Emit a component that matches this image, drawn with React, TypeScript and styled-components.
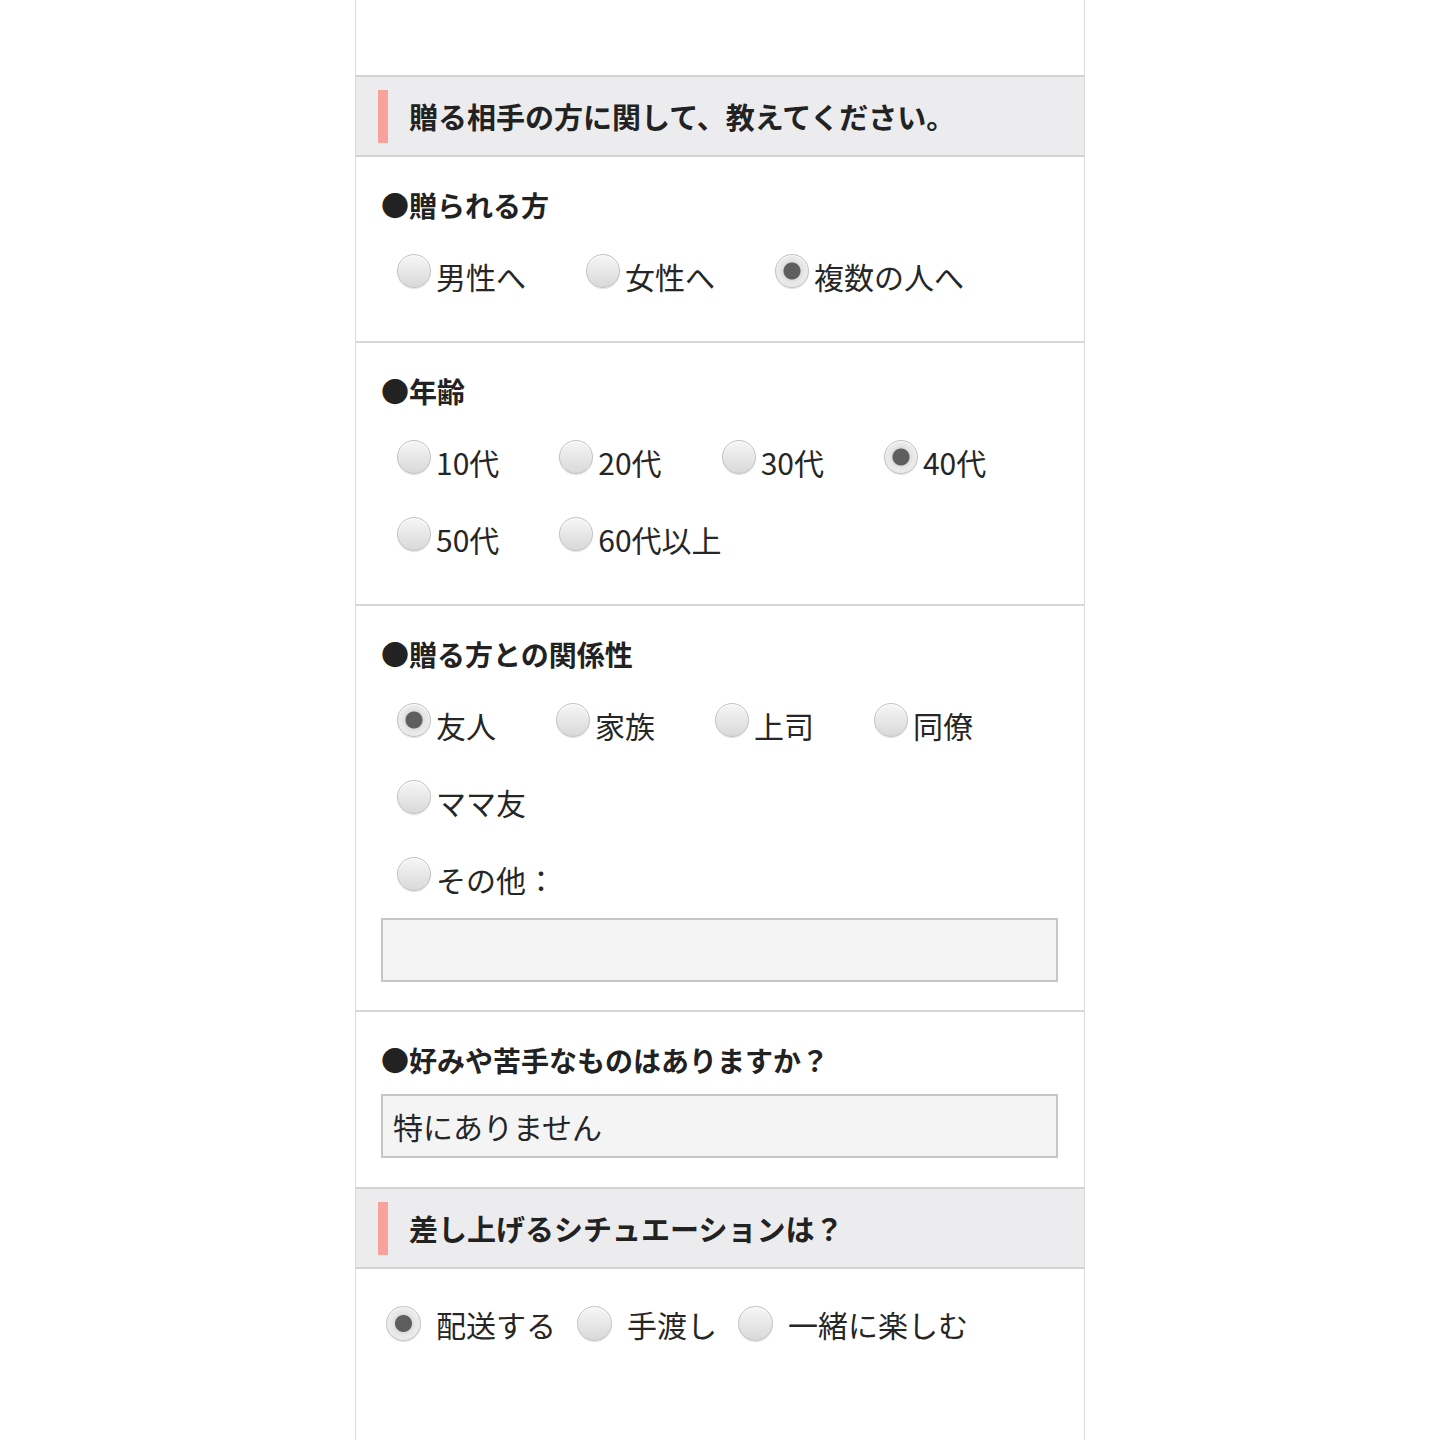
import React from "react";
import styled, { createGlobalStyle } from "styled-components";

const GlobalStyle = createGlobalStyle`
  html, body { margin: 0; padding: 0; background: #ffffff; }
  body {
    font-family: "Noto Sans CJK JP", "Noto Sans", sans-serif;
    color: #222;
  }
  * { box-sizing: border-box; }
`;

const Page = styled.div`
  width: 730px;
  margin: 0 auto;
  min-height: 1440px;
  border-left: 1px solid #dcdcdc;
  border-right: 1px solid #dcdcdc;
  background: #fff;
`;

const TopSpace = styled.div`
  height: 75px;
`;

const Heading = styled.div`
  height: 82px;
  background: #ececee;
  border-top: 2px solid #d2d2d2;
  border-bottom: 2px solid #d2d2d2;
  display: flex;
  align-items: center;
  padding-left: 22px;
  gap: 21px;
`;

const Accent = styled.span`
  width: 10px;
  height: 53px;
  background: #f9a29b;
  flex: none;
`;

const HeadingText = styled.h2`
  margin: 0;
  font-size: 29px;
  font-weight: 700;
  line-height: 40px;
  color: #222;
  letter-spacing: 0;
`;

const Section = styled.section<{ $divider?: boolean; $top?: number; $bottom?: number }>`
  padding: ${(p) => p.$top ?? 28}px 26px ${(p) => p.$bottom ?? 27}px 25px;
  border-bottom: ${(p) => (p.$divider ? "2px solid #d6d6d6" : "none")};
`;

const Label = styled.div`
  font-size: 28px;
  font-weight: 700;
  line-height: 40px;
  color: #222;
`;

const Options = styled.div`
  display: flex;
  flex-wrap: wrap;
  padding-left: 16px;
  margin-top: 12px;
`;

const OptionsBreak = styled.div`
  flex-basis: 100%;
  height: 0;
`;

const Option = styled.label`
  display: flex;
  align-items: center;
  height: 77px;
  margin-right: 60px;
  font-size: 30px;
  line-height: 40px;
  color: #262626;
  cursor: pointer;
`;

const Radio = styled.input.attrs({ type: "radio" })`
  appearance: none;
  -webkit-appearance: none;
  margin: 0 5px 9px 0;
  width: 34px;
  height: 34px;
  border-radius: 50%;
  border: 1px solid #c2c2c2;
  background: linear-gradient(180deg, #f6f6f6 0%, #e6e6e6 55%, #d9d9d9 100%);
  box-shadow: 0 1px 1px rgba(0, 0, 0, 0.12), inset 0 1px 1px rgba(255, 255, 255, 0.9);
  flex: none;
  cursor: pointer;

  &:checked {
    background: radial-gradient(circle, #5e5e5e 0 8px, #dcdcdc 9px, #e8e8e8 12px, #f0f0f0 100%);
  }
`;

const TextField = styled.div<{ $top?: number }>`
  margin-top: ${(p) => p.$top ?? 0}px;
  height: 64px;
  background: #f4f4f4;
  border: 2px solid #c6c6c6;
  display: flex;
  align-items: center;
  padding: 0 10px;
  font-size: 30px;
  line-height: 40px;
  color: #262626;
`;

const SituationRow = styled.div`
  display: flex;
  align-items: center;
  height: 77px;
  padding-left: 5px;
`;

const SituationOption = styled.label`
  display: flex;
  align-items: center;
  margin-right: 21px;
  font-size: 30px;
  line-height: 40px;
  color: #262626;
  cursor: pointer;
`;

const SituationRadio = styled(Radio)`
  width: 35px;
  height: 35px;
  margin: 0 15px 0 0;
`;

type Opt = { label: string; checked?: boolean; breakBefore?: boolean };

const RadioGroup: React.FC<{ name: string; options: Opt[] }> = ({ name, options }) => (
  <Options>
    {options.map((o) => (
      <React.Fragment key={o.label}>
        {o.breakBefore && <OptionsBreak />}
        <Option>
          <Radio name={name} defaultChecked={o.checked} />
          {o.label}
        </Option>
      </React.Fragment>
    ))}
  </Options>
);

export default function App() {
  return (
    <>
      <GlobalStyle />
      <Page>
        <TopSpace />
        <Heading>
          <Accent />
          <HeadingText>贈る相手の方に関して、教えてください。</HeadingText>
        </Heading>

        <Section $divider>
          <Label>●贈られる方</Label>
          <RadioGroup
            name="target"
            options={[
              { label: "男性へ" },
              { label: "女性へ" },
              { label: "複数の人へ", checked: true },
            ]}
          />
        </Section>

        <Section $divider>
          <Label>●年齢</Label>
          <RadioGroup
            name="age"
            options={[
              { label: "10代" },
              { label: "20代" },
              { label: "30代" },
              { label: "40代", checked: true },
              { label: "50代", breakBefore: true },
              { label: "60代以上" },
            ]}
          />
        </Section>

        <Section $divider $bottom={28}>
          <Label>●贈る方との関係性</Label>
          <RadioGroup
            name="relation"
            options={[
              { label: "友人", checked: true },
              { label: "家族" },
              { label: "上司" },
              { label: "同僚" },
              { label: "ママ友", breakBefore: true },
              { label: "その他：", breakBefore: true },
            ]}
          />
          <TextField $top={1} />
        </Section>

        <Section $bottom={29}>
          <Label>●好みや苦手なものはありますか？</Label>
          <TextField $top={14}>特にありません</TextField>
        </Section>

        <Heading>
          <Accent />
          <HeadingText>差し上げるシチュエーションは？</HeadingText>
        </Heading>

        <Section $top={16} $bottom={80}>
          <SituationRow>
            <SituationOption>
              <SituationRadio name="situation" defaultChecked />
              配送する
            </SituationOption>
            <SituationOption>
              <SituationRadio name="situation" />
              手渡し
            </SituationOption>
            <SituationOption>
              <SituationRadio name="situation" />
              一緒に楽しむ
            </SituationOption>
          </SituationRow>
        </Section>
      </Page>
    </>
  );
}
